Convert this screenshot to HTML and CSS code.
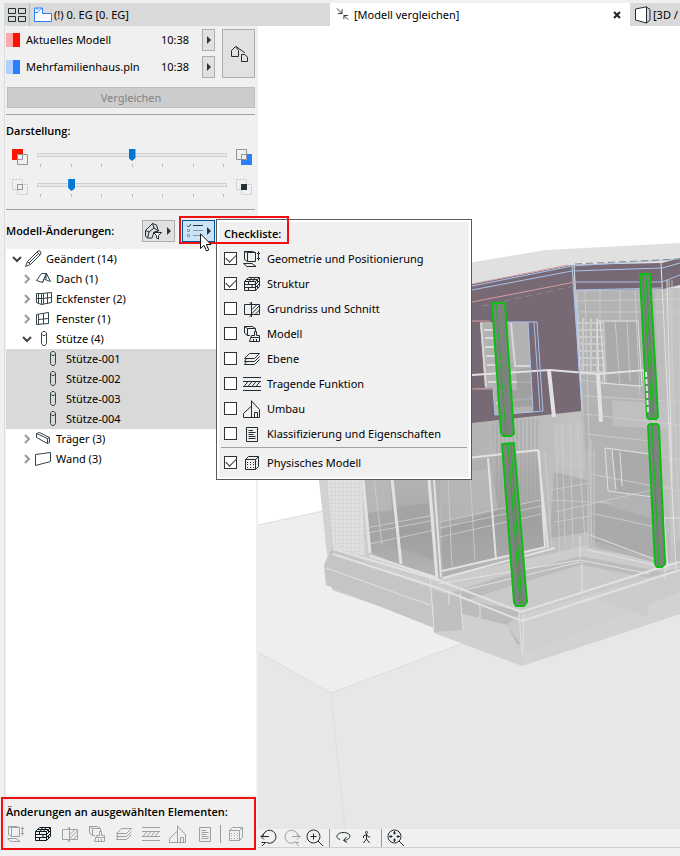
FILE: index.html
```html
<!DOCTYPE html>
<html lang="de">
<head>
<meta charset="utf-8">
<title>Modell vergleichen</title>
<link rel="stylesheet" href="styles.css">
</head>
<body>
<svg class="sprite" aria-hidden="true">
  <symbol id="i-geometry" viewBox="0 0 18 18"><path d="M4.500 2.500H12.500V11.500H4.500ZM1.500 1.500H9.500L12.500 2.500M1.500 1.500V9.500L4.500 11.500M1.500 1.500L4.500 2.500M.5 13.500H9L13 16.500H4ZM15.500 1.500V10.500M14 3.500H17M14 8.500H17"/></symbol>
  <symbol id="i-structure" viewBox="0 0 18 18"><path d="M1.500 6.500H12.500V15.500H1.500ZM1.500 6.500L5.500 2.500H16.500L12.500 6.500M16.500 2.500V11.500L12.500 15.500M1.500 9.500H12.500M1.500 12.500H12.500M5.500 6.500V9.500M9 9.500V12.500M5.500 12.500V15.500M3.500 4.500H14.500M8.500 2.500L6.500 6.500M12 2.500L9.500 6.500M12.500 9.500L16.500 5.500M12.500 12.500L16.500 8.500M14.500 5V7.500M14.500 10.500V13.500"/></symbol>
  <symbol id="i-section" viewBox="0 0 18 18"><path d="M8 4.500H1.500V14.500H8M8.500 2V17M8.500 4.500H16.500V14.500H8.500M6.500 2.500L8.500 4M6.500 16.500L8.500 15M9 9.500L13.500 5M9 13.500L16 6M12.500 14L16.500 10"/></symbol>
  <symbol id="i-model" viewBox="0 0 18 18"><path d="M7 10.500H4.500V3.500H12.500V6M1.500 1.500H9.500L12.500 3.500M1.500 1.500V8L4.500 10.500M1.500 1.500L4.500 3.500M11.500 10.500V6.500H13.500V10.500H16.500V16.500H6.500L8.500 10.500H11.500M8 12.500H16.500M10.500 14V16M13.500 14V16"/></symbol>
  <symbol id="i-layer" viewBox="0 0 18 18"><path d="M1.500 8.500L6.500 3.500H16.500L11.500 8.500ZM3.500 8.500L1.500 11.500H11.500L16.500 6.500M3.500 11.500L1.500 14.500H11.500L16.500 9.500"/></symbol>
  <symbol id="i-bearing" viewBox="0 0 18 18"><path d="M0 2.500H18M0 15.500H18M0 6.500H18M0 11.500H18M1 11.500L5 6.500M5 11.500L9 6.500M9 11.500L13 6.500M13 11.500L17 6.500"/></symbol>
  <symbol id="i-house" viewBox="0 0 18 18"><path d="M8.500 .5V17.500M8.500 1L16.500 9.500V17.500H.5V13.500L8.500 6M11.500 17V12.500H14.500V17"/></symbol>
  <symbol id="i-document" viewBox="0 0 18 18"><path d="M3.500 2.500H14.500V16.500H3.500ZM5.500 5.500H10M5.500 7.500H12.500M5.500 9.500H10.500M5.500 11.500H12.500M5.500 13.500H12.500"/></symbol>
  <symbol id="i-physical" viewBox="0 0 18 18"><path d="M2.500 5.500H12.500V15.500H2.500ZM2.500 5.500L5.500 2.500H15.500L12.500 5.500M15.500 2.500V12.500L12.500 15.500"/><path stroke-dasharray="1 2" d="M4 8.500H12M4 10.500H12M4 13.500H12"/></symbol>
  <symbol id="i-column" viewBox="0 0 18 18"><path d="M6.500 4V3L8 1.500H10L11.500 3V4L10 5.500H8L6.500 4V13.500L8 15.500H10L11.500 13.500V4"/></symbol>
  <symbol id="i-roof" viewBox="0 0 18 18"><path d="M1.500 10.500L6.500 3.500H11.500L7.500 12.500ZM11.500 3.500L15.500 11.500L10 9.500M7.500 12.500L11.500 3.500M11 4V9.500"/></symbol>
  <symbol id="i-corner" viewBox="0 0 18 18"><path d="M1.500 3.500H6.500L16.500 2.500V12.500L6.500 14.500L1.500 12.500ZM6.500 3.500V14.500M8.500 3.500V14M12.500 3V13.500M3.500 3.500V13.500M1.500 8.500H7L16.500 7.500"/></symbol>
  <symbol id="i-window" viewBox="0 0 18 18"><path d="M1.500 4.500L13.500 2.500V13.500L1.500 14.500ZM3.500 4.500V14M8.500 4V14M3.500 9.500L13.500 8.500"/></symbol>
  <symbol id="i-beam" viewBox="0 0 18 18"><path d="M1.500 3.500V7.500L12.500 13.500V8.500ZM1.500 3.500L4.500 2.500L14.500 7.500V12.500L12.500 13.500M12.500 8.500L14.500 7.500"/></symbol>
  <symbol id="i-wall" viewBox="0 0 18 18"><path d="M.5 4.500L15.500 2.500V11.500L.5 15.500Z"/></symbol>
  <symbol id="i-pen" viewBox="0 0 18 18"><path d="M.5 16.500L2.500 11.500L12 2L15 5L5.500 14.500ZM2.500 11.500L5.500 14.500M4 13L13.500 3.500M12 2L13 1H15L16 3L15 5"/></symbol>
  <symbol id="i-open" viewBox="0 0 10 10"><path d="M1 3L5 7L9 3"/></symbol>
  <symbol id="i-closed" viewBox="0 0 10 10"><path d="M3 1L7 5L3 9"/></symbol>
</svg>

<div class="app">
  <nav class="tabs" aria-label="Ansichten">
    <button class="overview" aria-label="Übersicht"><svg class="ico" width="20" height="16" viewBox="0 0 20 16"><path d="M1.500 1.500H8.500V6.500H1.500ZM11.500 1.500H18.500V6.500H11.500ZM1.500 9.500H8.500V14.500H1.500ZM11.500 9.500H18.500V14.500H11.500Z"/></svg></button>
    <button class="tab">
      <svg class="ico plan" width="18" height="16" viewBox="0 0 18 16"><path fill="#fff" d="M.5 1H8.500V6.500H17.500V14.500H.5Z"/><path d="M.5 5.500H4M3.500 5L8 1M3 1V3"/></svg>
      <span>(!) 0. EG [0. EG]</span>
    </button>
    <div class="tab active">
      <svg class="ico" width="15" height="15" viewBox="0 0 15 15"><path d="M1 1L6 6M6.500 2V6.500H2M13 13L8.500 8.500M8.500 12.500V8.500H13"/></svg>
      <span>[Modell vergleichen]</span>
      <button class="close" aria-label="Schließen"><svg width="8" height="8" viewBox="0 0 8 8"><path d="M1 1L7 7M7 1L1 7"/></svg></button>
    </div>
    <button class="tab next">
      <svg class="ico" width="17" height="18" viewBox="0 0 17 18"><path fill="#fff" d="M1 3L12 .8V17L1 14Z"/><path d="M12 1L15.500 3.500V14L12 17"/></svg>
      <span>[3D /</span>
    </button>
  </nav>

  <main class="main">
    <aside class="panel">
      <section class="sources">
        <div class="source-list">
          <div class="source"><i class="swatch red"></i><span>Aktuelles Modell</span><time>10:38</time><button class="btn arrow" aria-label="Aktuelles Modell wählen"></button></div>
          <div class="source"><i class="swatch blue"></i><span>Mehrfamilienhaus.pln</span><time>10:38</time><button class="btn arrow" aria-label="Vergleichsmodell wählen"></button></div>
        </div>
        <button class="btn big" aria-label="Modelle öffnen"><svg class="ico" width="18" height="18" viewBox="0 0 18 18"><path d="M1.500 11.500V5.500L5.500 1.500L8.500 5.500V11.500ZM6 1.500L15 8M11.500 16.500V9.500H14.500L17.500 12V16.500Z"/></svg></button>
      </section>
      <button class="btn compare" disabled>Vergleichen</button>
      <hr class="rule">
      <h2 class="heading">Darstellung:</h2>
      <div class="slider-row">
        <svg width="16" height="16" viewBox="0 0 16 16"><path fill="#f10" d="M0 0H11V11H0Z"/><path fill="#f0f0f0" d="M5 5H16V16H5Z"/><path class="outline" d="M5.500 5.500H15.500V15.500H5.500ZM10.500 5.500V10.500H5.500"/></svg>
        <div class="slider"><input type="range" min="0" max="6" value="3" aria-label="Farbgewichtung"><div class="ticks"><i></i><i></i><i></i><i></i><i></i><i></i><i></i></div></div>
        <svg width="16" height="16" viewBox="0 0 16 16"><path fill="#2a7fff" d="M5 5H16V16H5Z"/><path fill="#f0f0f0" d="M0 0H11V11H0Z"/><path class="outline" d="M.5 .5H10.500V10.500H.5ZM5.500 10.500V5.500H10.500"/></svg>
      </div>
      <div class="slider-row">
        <svg width="16" height="16" viewBox="0 0 16 16"><path class="dashed" d="M.5 .5H10.500V10.500H.5ZM5.500 5.500H15.500V15.500H5.500Z"/><path class="outline" d="M5.500 5.500H10.500V10.500H5.500Z"/></svg>
        <div class="slider"><input type="range" min="0" max="6" value="1" aria-label="Deckkraft"><div class="ticks"><i></i><i></i><i></i><i></i><i></i><i></i><i></i></div></div>
        <svg width="16" height="16" viewBox="0 0 16 16"><path class="dashed" d="M.5 .5H10.500V10.500H.5ZM5.500 5.500H15.500V15.500H5.500Z"/><path fill="#263238" d="M5 5H11V11H5Z"/></svg>
      </div>
      <hr class="rule">
      <div class="changes">
        <h2 class="heading">Modell-Änderungen:</h2>
        <button class="btn tool" aria-label="Filter"><svg class="ico" width="19" height="18" viewBox="0 0 19 18"><path d="M1.500 8.500L8.500 1.500L12.500 3L14.500 9L10 10L8 16H3.500L1.500 14ZM1.500 8.500L5 10L10 6L14.500 9M8.500 1.500L10 6M5 10L3.500 16"/><path fill="#f4f4f4" d="M9.500 10.500H17.500L14.500 13.500V17L12.500 16V13.500Z"/></svg></button>
        <div class="anchor">
          <button class="btn tool pressed" aria-label="Checkliste"><svg width="18" height="16" viewBox="0 0 18 16"><path class="dark" d="M1 2.500L2.500 4L5 1M7 2.500H17"/><path class="outline" d="M1.500 6.500H3.500V8.500H1.500ZM1.500 11.500H3.500V13.500H1.500ZM7 7.500H17M7 12.500H17"/></svg></button>
          <form class="popup">
            <h2 class="heading">Checkliste:</h2>
            <label><input type="checkbox" checked><svg class="ico"><use href="#i-geometry"/></svg>Geometrie und Positionierung</label>
            <label><input type="checkbox" checked><svg class="ico"><use href="#i-structure"/></svg>Struktur</label>
            <label><input type="checkbox"><svg class="ico"><use href="#i-section"/></svg>Grundriss und Schnitt</label>
            <label><input type="checkbox"><svg class="ico"><use href="#i-model"/></svg>Modell</label>
            <label><input type="checkbox"><svg class="ico"><use href="#i-layer"/></svg>Ebene</label>
            <label><input type="checkbox"><svg class="ico"><use href="#i-bearing"/></svg>Tragende Funktion</label>
            <label><input type="checkbox"><svg class="ico"><use href="#i-house"/></svg>Umbau</label>
            <label><input type="checkbox"><svg class="ico"><use href="#i-document"/></svg>Klassifizierung und Eigenschaften</label>
            <hr class="rule">
            <label><input type="checkbox" checked><svg class="ico"><use href="#i-physical"/></svg>Physisches Modell</label>
          </form>
          <div class="mark mark-checklist"></div>
          <svg class="cursor" width="12" height="19" viewBox="0 0 12 19"><path fill="#fff" stroke="#111" d="M.5 .8V15.500L4 12.300L6.500 18L8.800 17L6.400 11.500H11Z"/></svg>
        </div>
      </div>
      <ul class="tree">
        <li><svg class="caret open"><use href="#i-open"/></svg><svg class="ico"><use href="#i-pen"/></svg>Geändert (14)</li>
        <li class="l1"><svg class="caret"><use href="#i-closed"/></svg><svg class="ico"><use href="#i-roof"/></svg>Dach (1)</li>
        <li class="l1"><svg class="caret"><use href="#i-closed"/></svg><svg class="ico"><use href="#i-corner"/></svg>Eckfenster (2)</li>
        <li class="l1"><svg class="caret"><use href="#i-closed"/></svg><svg class="ico"><use href="#i-window"/></svg>Fenster (1)</li>
        <li class="l1"><svg class="caret open"><use href="#i-open"/></svg><svg class="ico"><use href="#i-column"/></svg>Stütze (4)</li>
        <li class="l2"><svg class="ico"><use href="#i-column"/></svg>Stütze-001</li>
        <li class="l2"><svg class="ico"><use href="#i-column"/></svg>Stütze-002</li>
        <li class="l2"><svg class="ico"><use href="#i-column"/></svg>Stütze-003</li>
        <li class="l2"><svg class="ico"><use href="#i-column"/></svg>Stütze-004</li>
        <li class="l1"><svg class="caret"><use href="#i-closed"/></svg><svg class="ico"><use href="#i-beam"/></svg>Träger (3)</li>
        <li class="l1"><svg class="caret"><use href="#i-closed"/></svg><svg class="ico"><use href="#i-wall"/></svg>Wand (3)</li>
      </ul>
      <section class="selection">
        <h2 class="heading">Änderungen an ausgewählten Elementen:</h2>
        <div class="flags">
          <svg class="ico"><use href="#i-geometry"/></svg>
          <svg class="ico on"><use href="#i-structure"/></svg>
          <svg class="ico"><use href="#i-section"/></svg>
          <svg class="ico"><use href="#i-model"/></svg>
          <svg class="ico"><use href="#i-layer"/></svg>
          <svg class="ico"><use href="#i-bearing"/></svg>
          <svg class="ico"><use href="#i-house"/></svg>
          <svg class="ico"><use href="#i-document"/></svg>
          <i class="divider"></i>
          <svg class="ico"><use href="#i-physical"/></svg>
        </div>
        <div class="mark mark-selection"></div>
      </section>
    </aside>

    <section class="viewer">
      <div class="canvas">
        <svg class="scene" viewBox="258 26 422 803" preserveAspectRatio="xMinYMin slice" role="img" aria-label="3D-Modell">
          <defs>
            <linearGradient id="wall" x1="0" y1="0" x2="1" y2="0"><stop offset="0" stop-color="#b9b9b9"/><stop offset=".4" stop-color="#b1b1b1"/><stop offset="1" stop-color="#c3c3c3"/></linearGradient>
            <linearGradient id="glass" x1="0" y1="0" x2="0" y2="1"><stop offset="0" stop-color="#b4b4b4"/><stop offset=".55" stop-color="#a4a4a4"/><stop offset="1" stop-color="#b5b5b5"/></linearGradient>
            <pattern id="slats" width="4" height="6" patternUnits="userSpaceOnUse"><path d="M1 0V6" stroke="#999" stroke-width="1"/></pattern>
            <pattern id="brick" width="14" height="7" patternUnits="userSpaceOnUse"><path d="M0 1H14M3 0V7M9 0V7" stroke="#d4d4d4" stroke-width="2"/></pattern>
            <pattern id="dots" width="4" height="4" patternUnits="userSpaceOnUse"><path d="M0 3L3 0" stroke="#e2e2e2" stroke-width="2"/></pattern>
          </defs>
          <path fill="#eee" d="M258 525L330 509H680V829H258Z"/>
          <path fill="#e7e7e7" d="M258 652L331 693L680 562V829H258Z"/>
          <path fill="none" stroke="#ddd" d="M258 525L324 511M258 652L331 693L496 631M331 693L345 829"/>
          <path fill="#e0e0e0" d="M450 266L546 250L680 243V290H450Z"/>
          <path fill="#ccc" d="M318 470H450V420L680 400V600L522 655L434 625L332 590V566L324 565L328 555Z"/>
          <path fill="#d2d2d2" d="M318 470L327 555H332L326 470Z"/>
          <path fill="url(#wall)" d="M363 470L472 410L590 395L590 545L440 578L370 553Z"/>
          <path fill="#bdbdbd" d="M574 288H680V565L588 548Z"/>
          <path fill="#d6d6d6" d="M326 470H361L365 556L333 548Z"/>
          <path fill="url(#dots)" d="M326 470H361L365 556L333 548Z"/>
          <path fill="url(#glass)" d="M366 478H426L435 578L370 553Z"/>
          <path fill="url(#glass)" d="M440 462L540 451L546 546L443 571Z"/>
          <path fill="#bbb" opacity=".7" d="M440 475L492 468L498 510L440 530ZM366 478H389L392 510L368 513Z"/>
          <path fill="#9c9c9c" opacity=".45" d="M441 521L538 501L545 546L443 571ZM392 508L430 503L434 560L396 546Z"/>
          <path fill="#b3b3b3" d="M578 292L655 290L664 565L590 545Z"/>
          <path fill="#a2a2a2" opacity=".55" d="M605 322L640 321L643 386L608 384ZM612 450L648 455L650 498L616 492ZM554 472L588 480V532L550 538ZM590 500L662 522V560L590 540Z"/>
          <path fill="#c5c5c5" opacity=".7" d="M555 424L582 422L586 470L557 468ZM612 400L680 405V430L613 426ZM665 290L680 288V540L670 545Z"/>
          <path fill="url(#slats)" opacity=".6" d="M492 422L538 418L542 494L496 498Z"/>
          <path fill="#bcbcbc" d="M430 600L496 578L580 556L664 572L680 568V594L522 645L434 625Z"/>
          <path fill="#cacaca" d="M466 600L580 565L650 578L524 612ZM507 625L524 610L648 580V606L528 655Z"/>
          <path fill="#c5c5c5" d="M324 566L332 548L434 590V628L326 585Z"/>
          <path fill="#d0d0d0" d="M432 606L507 625L522 655L680 592V614L522 666L434 633Z"/>
          <path fill="#c0c0c0" d="M433 590L461 598L463 630L434 632ZM594 597L648 578V617L600 600Z"/>
          <path fill="#d3d3d3" opacity=".65" d="M523 614L664 573L680 569V613L523 665Z"/>

          <path fill="#b2b2b2" d="M472 322L528 322L533 411L495 415L493 388L472 389Z"/>
          <path fill="#786a75" fill-rule="evenodd" d="M472 284L572 265L582 411L472 423ZM472 322L528 322L533 412L495 415L493 388L472 389Z"/>
          <path fill="#786a75" d="M572 265L662 263L680 258V285L663 289L575 290Z"/>
          <path fill="#786a75" d="M472 322H480L485 388L472 389Z"/>
          <path fill="none" stroke="#d8d8d8" stroke-width="2" d="M481 323L486 387M484 330H501M485 338H502M485 347H503M486 356H503M487 365H504M511 323L515 365M514 366H530M488 382H532M496 403L532 398"/>
          <path fill="#999" opacity=".7" d="M516 370L531 368L533 406L498 408L496 390H517Z"/>
          <path fill="url(#brick)" opacity=".7" d="M578 318H604L606 375H581Z"/>
          <g fill="none" stroke="#d0d0d0" opacity=".8">
            <path d="M577 301L680 299M580 312H680M585 396L680 402M585 414L680 425M580 380L640 387M586 434L650 441M588 450V548M591 440V545M594 450V550M585 290L592 545M655 455L680 460M590 474L680 491M590 513L670 530M549 500L610 503M550 490L590 483M555 522L590 516M555 512L670 486"/>
            <path d="M600 290V320M620 290V320M635 290L640 395M669 280L680 540M672 280V570M680 288V470M603 322V385M615 320L620 385M627 320L630 382M555 425L560 560M562 425L565 545M570 424L573 550M577 423L586 555M545 452L552 548"/>
            <path d="M366 528L434 515M367 533L435 520M365 545L435 530M440 522L540 500M440 528L541 506M440 537L542 514M374 478L382 545M448 476L452 567M470 473L475 560"/>
          </g>
          <g fill="none" stroke="#e2e2e2">
            <path stroke-width="3" d="M363 479L370 553M392 479L401 564M429 479L437 579"/>
            <path stroke-width="2" d="M434 479L441 577M440 461L538 450L548 548M442 571L546 547M488 458L496 560M539 451L545 547M443 578L555 548M333 549L435 579L521 612L665 566L680 562M333 554L438 588L522 621L680 570M370 556L435 577"/>
            <path d="M326 568L430 605M438 584L580 560L650 574M460 591L580 562M430 578L434 628M460 593L463 630M449 590V605M519 612L522 655M523 614V655M580 536V558M664 518L668 570M664 518H680M665 568V580M480 605V618M582 562V592M605 448L658 455L661 498L608 491ZM612 450L616 490M620 452L622 486M590 535L670 565M588 550L668 568M574 264L582 411M661 263L676 570M667 280L672 480M597 321H638L642 386L599 383ZM600 321L605 383"/>
            <path stroke-width="2" d="M472 375L550 370L598 374L646 370"/>
            <path stroke-width="4" d="M549 371L554 417M598 374L601 422M645 371L649 417"/>
          </g>
          <path fill="none" stroke="#a9c2eb" d="M472 286L572 266L680 259M472 290L572 271L662 268L680 263M573 282H662L680 275M576 290L663 288M572 265L582 411M575 282L579 370M502 322H537L543 411L495 415L493 388M528 322L533 410M534 322L540 410"/>
          <path fill="none" stroke="#d69da0" d="M472 284L568 265M472 302L575 282M472 321H490M472 389H492"/>
          <path fill="none" stroke="#888" stroke-dasharray="7 4" d="M575 264L680 259M482 306L574 286"/>
          <g fill="#7c837c" stroke="#0abf12" stroke-width="2" stroke-linejoin="round">
            <path d="M492 303L505 303L514 434L511 436H503L501 433Z"/>
            <path d="M502 444L514 443L527 602L524 606H516L514 602Z"/>
            <path d="M640 274L650 274L658 417L656 419H649L647 417Z"/>
            <path d="M648 426L650 424H657L659 426L665 564L662 567H657L655 564Z"/>
          </g>
          <g fill="none" stroke="#0abf12">
            <path d="M496 303L506 434" stroke-dasharray="7 3"/><path d="M508 444L520 604M511 444L522 604M643 274L652 417M646 274L654 417M652 426L659 565"/>
          </g>
          <path stroke="#e3e3e3" stroke-width="2" stroke-dasharray="5 2" d="M646 372L648 412"/>
        </svg>
      </div>
      <div class="viewbar">
        <button aria-label="Zurück"><svg class="ico" width="18" height="18" viewBox="0 0 18 18"><path d="M3 8A6.500 6.500 0 1 1 6.500 13.500M1 7.500H9M4 4.500L1 7.500L4 10.500M6 13L2 17M1.500 13.500H6"/></svg></button>
        <button aria-label="Vor" disabled><svg class="ico" width="18" height="18" viewBox="0 0 18 18"><path d="M15 8A6.500 6.500 0 1 0 11.500 13.500M17 7.500H9M14 4.500L17 7.500L14 10.500M11 12L16 17M12 13.500H16"/></svg></button>
        <button aria-label="Vergrößern"><svg class="ico" width="18" height="18" viewBox="0 0 18 18"><circle cx="7.500" cy="7.500" r="6.500"/><path d="M4.500 7.500H10.500M7.500 4.500V10.500M12 12L17 17"/></svg></button>
        <i class="divider"></i>
        <button aria-label="Orbit"><svg class="ico" width="18" height="18" viewBox="0 0 18 18"><path d="M5 10.500C0 9 1 4 8 3.500C17 3.500 17 10 9 11.500M11.500 8L8.500 11.500L12 13.500"/></svg></button>
        <button aria-label="Erkunden"><svg class="ico" width="18" height="18" viewBox="0 0 18 18"><circle cx="8.500" cy="3.500" r="1"/><path d="M8.500 5V10L5.500 14M8.500 10L11.500 14M5.500 9V7L8.500 5.500L10.500 8H12"/></svg></button>
        <i class="divider"></i>
        <button aria-label="Einpassen"><svg class="ico" width="18" height="18" viewBox="0 0 18 18"><circle cx="7.500" cy="7.500" r="6.500"/><path d="M7.500 2V5.500M7.500 9.500V13M2 7.500H5.500M9.500 7.500H13M6 4H9M6 11H9M4 6V9M11 6V9M12 12L17 17"/></svg></button>
      </div>
    </section>
  </main>
</div>
</body>
</html>
```
FILE: styles.css
```css
* { box-sizing: border-box; }
body {
  margin: 0;
  background: #f0f0f0;
  color: #000;
  font: 11px/20px "Noto Sans", "Open Sans", sans-serif;
}
button, input { font: inherit; color: inherit; margin: 0; }
button { padding: 0; border: 0; background: none; }
svg { display: block; flex: none; }
.sprite { position: absolute; width: 0; height: 0; }
.ico { width: 18px; height: 18px; fill: none; stroke: #202c32; stroke-width: 1; }
.outline { fill: none; stroke: #8f969a; }
.dashed { fill: none; stroke: #c4c8c8; stroke-dasharray: 2 1; }
.dark { fill: none; stroke: #263238; }
.heading { margin: 0; font-size: 11px; line-height: 20px; font-weight: 600; font-family: "Open Sans", "Noto Sans", sans-serif; white-space: nowrap; }
.rule { height: 1px; margin: 0; border: 0; background: #a0a0a0; }
.divider { width: 1px; align-self: stretch; background: #999; }

.app { display: flex; flex-direction: column; min-height: 100vh; overflow: hidden; padding: 3px 0 8px 4px; }

.tabs { display: flex; height: 23px; background: #d9d9d9; overflow: hidden; }
.overview { flex: none; width: 26px; padding-left: 3px; border-right: 1px solid #bbb; }
.overview .ico { width: 20px; height: 16px; }
.tab { flex: 0 0 300px; display: flex; align-items: center; gap: 2px; padding: 0 9px 0 4px; white-space: nowrap; }
.active { gap: 4px; padding-left: 6px; background: #fff; }
.next { gap: 1px; }
.tab .plan { stroke: #2a7fff; height: 16px; }
.active .ico { width: 14px; height: 15px; }
.close { margin-left: auto; }
.close svg { stroke: #222; stroke-width: 2; }

.main { flex: 1; display: flex; }
.panel { flex: 0 0 254px; display: flex; flex-direction: column; padding: 0 2px 0 1px; border-left: 1px solid #ddd; }
.panel > .rule { margin-right: 1px; }
.btn { border: 1px solid #adadad; background: #e1e1e1; }
.sources { display: flex; gap: 7px; padding: 3px 1px 9px 0; }
.source-list { flex: 1; display: grid; gap: 5px; }
.source { display: flex; align-items: center; height: 22px; }
.source span { flex: 1; padding-left: 6px; }
.source time { padding-right: 13px; }
.swatch { width: 14px; height: 14px; }
.red { background: linear-gradient(90deg, #ffaaaa 50%, #f10 50%); }
.blue { background: linear-gradient(90deg, #b3d1ff 50%, #2a7fff 50%); }
.arrow { width: 13px; height: 22px; display: grid; place-items: center; }
.arrow::after, .tool::after { content: ""; border: 4px solid transparent; border-left: 4px solid #333; border-right: 0; }
.big { width: 33px; display: grid; place-items: center; }
.compare { height: 21px; margin: 0 1px; border-color: #bfbfbf; background: #ccc; color: #838383; line-height: 18px; }
.compare + .rule { margin-top: 6px; margin-bottom: 6px; }

.slider-row { display: flex; align-items: flex-start; gap: 9px; height: 30px; padding: 8px 4px 0 6px; }
.slider { flex: 1; }
.slider input { display: block; width: 100%; height: 12px; appearance: none; background: transparent; }
.slider input::-webkit-slider-runnable-track { height: 4px; border: 1px solid #d0d0d0; background: #e7eaea; }
.slider input::-webkit-slider-thumb { appearance: none; width: 7px; height: 12px; margin-top: -5px; background: #0078d7; clip-path: polygon(0 0, 100% 0, 100% 75%, 50% 100%, 0 75%); }
.ticks { display: flex; justify-content: space-between; padding: 3px 3px 0; }
.ticks i { width: 1px; height: 3px; background: #bbb; }
.slider-row + .rule { margin-top: 8px; }

.changes { display: flex; align-items: center; gap: 7px; padding: 10px 41px 7px 0; }
.changes > .heading { flex: 1; }
.tool { display: flex; align-items: center; justify-content: space-between; width: 33px; height: 22px; padding: 0 3px 0 1px; }
.tool .ico { width: 19px; }
.pressed { border-color: #005499; background: #cce4f7; padding-left: 3px; }
.anchor { position: relative; }
.popup { position: absolute; z-index: 2; left: 34px; top: -1px; width: 256px; padding: 2px 2px 4px; border: 1px solid #5a5a5a; background: #f0f0f0; box-shadow: inset 0 0 0 2px #fff; }
.popup .heading { padding: 2px 5px; }
.popup label { display: flex; align-items: center; height: 25px; padding-left: 5px; white-space: nowrap; }
.popup label .ico { margin: 0 6px 0 6px; }
.popup input { appearance: none; width: 13px; height: 13px; border: 1px solid #333; background: #fff; display: grid; place-items: center; }
.popup input:checked::after { content: ""; width: 9px; height: 5px; margin-top: -3px; border: solid #333; border-width: 0 0 1px 1px; rotate: -45deg; }
.popup .rule { margin: 1px 2px 2px; }
.mark { position: absolute; z-index: 3; border: 2px solid #f01010; pointer-events: none; }
.mark-checklist { left: -3px; top: -4px; width: 110px; height: 28px; }
.cursor { position: absolute; z-index: 4; left: 18px; top: 13px; }

.tree { flex: 1; margin: 0; padding: 0; list-style: none; background: #fff; }
.tree li { display: flex; align-items: center; gap: 3px; height: 20px; padding-left: 6px; white-space: nowrap; }
.tree .l1 { padding-left: 16px; }
.tree .l2 { gap: 4px; padding-left: 38px; background: #d9d9d9; }
.tree .ico { stroke: #35444b; }
.caret { width: 10px; height: 10px; fill: none; stroke: #999; stroke-width: 2; }
.tree .open { stroke: #444; }

.selection { position: relative; padding: 7px 0 4px; }
.flags { display: flex; gap: 9px; padding: 3px 0 1px 1px; }
.flags .ico { opacity: .4; }
.flags .on { opacity: 1; stroke: #101b20; }
.flags .divider { margin: 0 -3px; }
.mark-selection { left: -5px; right: 0; top: 2px; bottom: -2px; }

.viewer { flex: 1; min-width: 0; display: flex; flex-direction: column; border-bottom: 1px solid #d0d0d0; }
.canvas { position: relative; flex: 1; background: #fff; overflow: hidden; }
.scene { position: absolute; inset: 0; width: 100%; height: 100%; }
.viewbar { display: flex; align-items: center; gap: 5px; height: 18px; padding-left: 2px; }
.viewbar button:disabled { opacity: .4; }
```
